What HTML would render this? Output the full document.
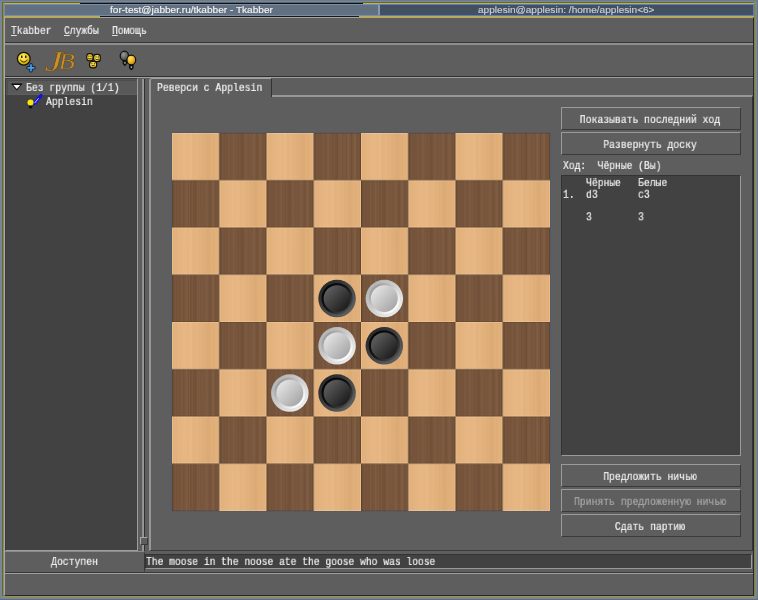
<!DOCTYPE html>
<html lang="ru">
<head>
<meta charset="utf-8">
<title>for-test@jabber.ru/tkabber - Tkabber</title>
<style>
html,body{margin:0;padding:0;}
body{width:758px;height:600px;overflow:hidden;background:#778797;position:relative;
  font-family:"Liberation Mono",monospace;font-size:12px;line-height:14px;color:#f2f2f2;}
*{box-sizing:border-box;}
.a,.hl,.t{position:absolute;}
.hl{left:5px;width:748px;height:1px;}
.dk{background:#333;}
.lt{background:#979797;}
.t{white-space:pre;transform:scale(.8035,.9);transform-origin:0 0;height:14px;will-change:transform;-webkit-text-stroke:.22px currentColor;}
.tc{transform-origin:50% 0;text-align:center;}
.w{transform:scale(.8118,.9);}
u{text-decoration:underline;text-underline-offset:1px;text-decoration-thickness:1px;}
#edge{left:0;top:0;width:758px;height:600px;border:solid #6e7d8e;border-width:1px 1px 1px 0;border-bottom-color:#5f6e7e;border-right-color:#6a7989;}
#frame{left:3px;top:3px;width:752px;height:594px;border:1px solid;border-color:#c8b61e #8f811c #a8981e #9c8d1e;background:#5e5e5e;box-shadow:-1px -1px 0 #566472;}
#tb1{left:4px;top:4px;width:375px;height:12px;background:#627182;border:1px solid #7a8ba2;border-right:none;}
#tb2{left:378px;top:4px;width:376px;height:12px;background:#43505f;border:1px solid #5f7cb8;border-left:2px solid #8799ae;}
#yl{left:4px;top:16px;width:750px;height:1px;background:#c4b21e;}
.title{-webkit-text-stroke:.15px currentColor;font-family:"Liberation Sans",sans-serif;font-size:9.2px;line-height:12px;height:12px;transform:scaleX(1.096);}
#blk1{left:80px;top:3px;width:283px;height:1px;background:#101010;}
#blk2{left:100px;top:16px;width:259px;height:1px;background:#181818;}
#win{left:4px;top:17px;width:750px;height:579px;background:#5e5e5e;border:1px solid;border-color:#a4a4a4 #26262c #23233a #a9a9ad;}
.btn{border:1px solid;border-color:#9a9a9a #3a3a3a #3a3a3a #9a9a9a;background:#5e5e5e;}
.sunk{border:1px solid;border-color:#333 #9a9a9a #9a9a9a #333;background:#424242;}
</style>
</head>
<body>
<div id="edge" class="a"></div>
<div id="frame" class="a"></div>
<div id="blk1" class="a"></div>
<div id="tb1" class="a"></div>
<div id="tb2" class="a"></div>
<div id="yl" class="a"></div>
<div id="blk2" class="a"></div>
<div class="t title" style="left:110px;top:4.3px;">for-test@jabber.ru/tkabber - Tkabber</div>
<div class="t title" style="left:478px;top:4.3px;color:#c8d0d8;">applesin@applesin: /home/applesin&lt;6&gt;</div>
<div id="win" class="a"></div>

<!-- menu bar -->
<div class="t" style="left:11.3px;top:25px;"><u>T</u>kabber</div>
<div class="t" style="left:64px;top:25px;"><u>С</u>лужбы</div>
<div class="t" style="left:112px;top:25px;"><u>П</u>омощь</div>
<div class="hl" style="top:42px;background:#383838;"></div>
<div class="hl" style="top:43px;height:2px;background:#8e8e8e;"></div>

<!-- toolbar -->
<svg class="a" style="left:10px;top:46px;will-change:transform;" width="130" height="30" viewBox="10 46 130 30">
  <defs>
    <radialGradient id="gy" cx="42%" cy="36%" r="70%"><stop offset="0" stop-color="#fff070"/><stop offset=".55" stop-color="#f0cc20"/><stop offset="1" stop-color="#b88808"/></radialGradient>
    <radialGradient id="go" cx="38%" cy="34%" r="72%"><stop offset="0" stop-color="#ffe070"/><stop offset=".5" stop-color="#f0b828"/><stop offset="1" stop-color="#b07c10"/></radialGradient>
    <radialGradient id="gf" cx="45%" cy="40%" r="65%"><stop offset="0" stop-color="#ffee60"/><stop offset=".7" stop-color="#f4cc24"/><stop offset="1" stop-color="#c89810"/></radialGradient>
    <radialGradient id="gg" cx="40%" cy="35%" r="70%"><stop offset="0" stop-color="#9a9a9a"/><stop offset="1" stop-color="#3c3c3c"/></radialGradient>
  </defs>
  <g>
    <circle cx="23.8" cy="58.7" r="6.4" fill="url(#gy)" stroke="#141414" stroke-width="1.3"/>
    <rect x="21" y="55.6" width="1.5" height="2.3" fill="#2a2208"/><rect x="25" y="55.6" width="1.5" height="2.3" fill="#2a2208"/>
    <path d="M20.2 59.8Q23.8 64.4 27.4 59.8" fill="none" stroke="#2a2208" stroke-width="1"/>
    <path d="M31 64.7v6.2M27.9 67.8h6.2" stroke="#10243c" stroke-width="3.4" stroke-linecap="round"/>
    <path d="M31 64.9v5.8M28.1 67.8h5.8" stroke="#4c9cec" stroke-width="1.7" stroke-linecap="round"/>
  </g>
  <g font-family="'Liberation Serif',serif" font-style="italic" fill="#c8902a" stroke="#6a4810" stroke-width=".45">
    <text x="44.4" y="71.4" font-size="29" textLength="18.5" lengthAdjust="spacingAndGlyphs">J</text>
    <text x="58.6" y="69.2" font-size="23.4" textLength="16.4" lengthAdjust="spacingAndGlyphs">B</text>
  </g>
  <g stroke="#101010" stroke-width="1.1" fill="url(#gf)">
    <rect x="86.8" y="53.6" width="6.2" height="7.2" rx="2.6"/>
    <rect x="93.7" y="54.4" width="6.6" height="7.2" rx="2.7"/>
    <rect x="89.5" y="61.5" width="7.2" height="6.4" rx="2.8"/>
  </g>
  <g fill="#2e2204">
    <rect x="88.5" y="55.5" width=".9" height="1.4"/><rect x="90.5" y="55.5" width=".9" height="1.4"/>
    <rect x="95.6" y="56.3" width=".9" height="1.4"/><rect x="97.8" y="56.3" width=".9" height="1.4"/>
    <rect x="91.5" y="63.1" width=".9" height="1.2"/><rect x="93.9" y="63.1" width=".9" height="1.2"/><rect x="91.7" y="65.2" width="2.9" height="1"/>
  </g>
  <path d="M88.2 58.2q1.7 1.6 3.4 0M95.4 59q1.8 1.6 3.6 0" fill="none" stroke="#2e2204" stroke-width=".9"/>
  <g stroke="#101010" stroke-width="1.2">
    <path d="M123.2 61h3.4v2.6l-1.7 1.7l-1.7-1.7z" fill="#3a3a3a"/>
    <ellipse cx="124.4" cy="55.9" rx="4.2" ry="4.7" fill="url(#gg)"/>
    <path d="M129.6 65.4h3.4v2.6l-1.7 1.7l-1.7-1.7z" fill="#3a3a3a"/>
    <ellipse cx="131.3" cy="60" rx="4.4" ry="4.8" fill="url(#go)"/>
  </g>
  <path d="M124.4 62.2h1.1v1.5h-1.1zM130.8 66.6h1.1v1.5h-1.1z" fill="#b4b4b4"/>
</svg>
<div class="hl" style="top:76px;background:#303030;"></div>
<div class="hl" style="top:77px;background:#a0a0a0;"></div>

<!-- roster -->
<div class="a sunk" style="left:5px;top:78px;width:133px;height:473px;border-color:#3c3c3c #9c9c9c #a0a0a0 #3a3a3a;"></div>
<div class="a" style="left:5px;top:551px;width:139px;height:1px;background:#8a8a8a;"></div>
<div class="a" style="left:6px;top:79px;width:131px;height:16px;border:1px solid #545454;border-bottom:none;"></div>
<div class="a" style="left:7px;top:80px;width:130px;height:15px;background:#595959;border:1px solid #4c4c4c;border-color:#4c4c4c #595959 #5f5f5f #4c4c4c;"></div>
<svg class="a" style="left:10px;top:82px;" width="36" height="28" viewBox="10 82 36 28">
  <path d="M10.9 83.6h11.8l-5.9 6.9z" fill="#0c0c0c"/>
  <path d="M13.3 84.9h7l-3.5 4z" fill="#fafafa"/>
  <rect x="28.9" y="105.2" width="3.3" height="3" fill="#0c0c0c"/>
  <path d="M34.2 103.6L41 95.6" stroke="#1414e0" stroke-width="3.3" stroke-linecap="round"/>
  <path d="M34.6 103L38.6 98.4" stroke="#e8e8ff" stroke-width=".9"/>
  <circle cx="30.5" cy="102.6" r="3" fill="#f4ec00"/>
</svg>
<div class="t w" style="left:26.2px;top:82px;">Без группы (1/1)</div>
<div class="t w" style="left:46.4px;top:96px;">Applesin</div>

<!-- sash -->
<div class="a" style="left:142px;top:79px;width:2px;height:472px;background:#8e8e8e;border-right:1px solid #9a9a9a;"></div>
<div class="a" style="left:144px;top:79px;width:1px;height:472px;background:#303030;"></div>
<div class="a btn" style="left:140px;top:537px;width:8px;height:8px;border-color:#a8a8a8 #3a3a3a #3a3a3a #a8a8a8;"></div>

<!-- notebook -->
<div class="a" style="left:149px;top:95px;width:604px;height:456px;border:1px solid;border-color:#9a9a9a #333 #3a3a3a #9a9a9a;border-left:2px solid #979797;border-top:2px solid #969696;"></div>
<div class="a" style="left:149px;top:78px;width:123px;height:19px;border:1px solid;border-color:#a0a0a0 #333 #5e5e5e #979797;border-left-width:2px;border-bottom:none;background:#5e5e5e;border-radius:3px 0 0 0;"></div>
<div class="t w" style="left:157px;top:82px;">Реверси с Applesin</div>

<!-- board -->
<div class="a" style="left:171px;top:132px;width:380px;height:380px;border:1px solid #515b69;"></div>
<svg id="board" class="a" style="left:172px;top:133px;" width="378" height="378" viewBox="0 0 378 378">
  <defs>
    <linearGradient id="lw" x1="0" x2="1" y1="0" y2="0"><stop offset="0.000" stop-color="#e1b07b"/><stop offset="0.031" stop-color="#e0af7a"/><stop offset="0.062" stop-color="#e3b37f"/><stop offset="0.094" stop-color="#e1b07b"/><stop offset="0.125" stop-color="#e4b480"/><stop offset="0.156" stop-color="#e5b480"/><stop offset="0.188" stop-color="#e4b37f"/><stop offset="0.219" stop-color="#e7b784"/><stop offset="0.250" stop-color="#e5b581"/><stop offset="0.281" stop-color="#e7b885"/><stop offset="0.312" stop-color="#e6b682"/><stop offset="0.344" stop-color="#e5b581"/><stop offset="0.375" stop-color="#e7b783"/><stop offset="0.406" stop-color="#e8b986"/><stop offset="0.438" stop-color="#e3b37f"/><stop offset="0.469" stop-color="#e3b27e"/><stop offset="0.500" stop-color="#e4b480"/><stop offset="0.531" stop-color="#e5b581"/><stop offset="0.562" stop-color="#e2b27d"/><stop offset="0.594" stop-color="#e0af7a"/><stop offset="0.625" stop-color="#e3b37e"/><stop offset="0.656" stop-color="#ddab76"/><stop offset="0.688" stop-color="#e1b07b"/><stop offset="0.719" stop-color="#deac76"/><stop offset="0.750" stop-color="#dcaa74"/><stop offset="0.781" stop-color="#dcaa74"/><stop offset="0.812" stop-color="#deac76"/><stop offset="0.844" stop-color="#e1b07b"/><stop offset="0.875" stop-color="#deac77"/><stop offset="0.906" stop-color="#e0af7a"/><stop offset="0.938" stop-color="#e1b07b"/><stop offset="0.969" stop-color="#e0af7a"/><stop offset="1.000" stop-color="#e1b07b"/></linearGradient>
    <linearGradient id="dw" x1="0" x2="1" y1="0" y2="0"><stop offset="0.000" stop-color="#6d4d35"/><stop offset="0.022" stop-color="#6c4c35"/><stop offset="0.043" stop-color="#6f4f37"/><stop offset="0.065" stop-color="#79583e"/><stop offset="0.087" stop-color="#75543b"/><stop offset="0.109" stop-color="#725139"/><stop offset="0.130" stop-color="#77563d"/><stop offset="0.152" stop-color="#75543b"/><stop offset="0.174" stop-color="#725139"/><stop offset="0.196" stop-color="#7c5a40"/><stop offset="0.217" stop-color="#7b593f"/><stop offset="0.239" stop-color="#715138"/><stop offset="0.261" stop-color="#77563d"/><stop offset="0.283" stop-color="#77563c"/><stop offset="0.304" stop-color="#7e5c42"/><stop offset="0.326" stop-color="#7c5a40"/><stop offset="0.348" stop-color="#725239"/><stop offset="0.370" stop-color="#805d43"/><stop offset="0.391" stop-color="#6f4f37"/><stop offset="0.413" stop-color="#74533a"/><stop offset="0.435" stop-color="#7b5a40"/><stop offset="0.457" stop-color="#6f4f37"/><stop offset="0.478" stop-color="#75543b"/><stop offset="0.500" stop-color="#6c4c35"/><stop offset="0.522" stop-color="#79573e"/><stop offset="0.543" stop-color="#7c5a40"/><stop offset="0.565" stop-color="#78573e"/><stop offset="0.587" stop-color="#7e5c42"/><stop offset="0.609" stop-color="#73523a"/><stop offset="0.630" stop-color="#7a583f"/><stop offset="0.652" stop-color="#78573e"/><stop offset="0.674" stop-color="#78573d"/><stop offset="0.696" stop-color="#75543b"/><stop offset="0.717" stop-color="#7d5b41"/><stop offset="0.739" stop-color="#805e43"/><stop offset="0.761" stop-color="#76553c"/><stop offset="0.783" stop-color="#7a583f"/><stop offset="0.804" stop-color="#6d4d36"/><stop offset="0.826" stop-color="#79583e"/><stop offset="0.848" stop-color="#7a583e"/><stop offset="0.870" stop-color="#815e44"/><stop offset="0.891" stop-color="#7e5c42"/><stop offset="0.913" stop-color="#725239"/><stop offset="0.935" stop-color="#73533a"/><stop offset="0.957" stop-color="#79583e"/><stop offset="0.978" stop-color="#6c4d35"/><stop offset="1.000" stop-color="#74533b"/></linearGradient>
    <pattern id="chk" width="94.5" height="94.5" patternUnits="userSpaceOnUse">
      <rect x="0" y="0" width="47.25" height="47.25" fill="url(#lw)"/>
      <rect x="47.25" y="0" width="47.25" height="47.25" fill="url(#dw)"/>
      <rect x="0" y="47.25" width="47.25" height="47.25" fill="url(#dw)"/>
      <rect x="47.25" y="47.25" width="47.25" height="47.25" fill="url(#lw)"/>
      <rect x="0.5" y="0.5" width="46.25" height="46.25" fill="none" stroke="#ffdcaa" stroke-opacity=".28"/>
      <rect x="47.75" y="47.75" width="46.25" height="46.25" fill="none" stroke="#ffdcaa" stroke-opacity=".28"/>
      <rect x="47.75" y="0.5" width="46.25" height="46.25" fill="none" stroke="#3a2412" stroke-opacity=".22"/>
      <rect x="0.5" y="47.75" width="46.25" height="46.25" fill="none" stroke="#3a2412" stroke-opacity=".22"/>
    </pattern>
    <linearGradient id="bo" x1="0.15" y1="0.15" x2="0.85" y2="0.85"><stop offset="0" stop-color="#26282a"/><stop offset="1" stop-color="#5c5e60"/></linearGradient>
    <linearGradient id="bg" x1="0.15" y1="0.15" x2="0.85" y2="0.85"><stop offset="0" stop-color="#050505"/><stop offset=".55" stop-color="#161616"/><stop offset="1" stop-color="#4a4a4a"/></linearGradient>
    <linearGradient id="bi" x1="0.15" y1="0.2" x2="0.85" y2="0.85"><stop offset="0" stop-color="#5a5a5a"/><stop offset="1" stop-color="#1e1e1e"/></linearGradient>
    <linearGradient id="wo" x1="0.15" y1="0.15" x2="0.85" y2="0.85"><stop offset="0" stop-color="#b4b4b4"/><stop offset="1" stop-color="#ececec"/></linearGradient>
    <linearGradient id="wg" x1="0.15" y1="0.15" x2="0.85" y2="0.85"><stop offset="0" stop-color="#9c9c9c"/><stop offset=".5" stop-color="#d0d0d0"/><stop offset="1" stop-color="#ffffff"/></linearGradient>
    <linearGradient id="wi" x1="0.15" y1="0.2" x2="0.85" y2="0.85"><stop offset="0" stop-color="#e0e0e0"/><stop offset="1" stop-color="#a8a8a8"/></linearGradient>
    <g id="bp"><circle r="18.75" fill="url(#bo)"/><circle r="15.6" fill="url(#bg)"/><circle r="13.4" fill="url(#bi)"/></g>
    <g id="wp"><circle r="18.75" fill="url(#wo)"/><circle r="15.6" fill="url(#wg)"/><circle r="13.4" fill="url(#wi)"/></g>
  </defs>
  <rect width="378" height="378" fill="url(#chk)"/>
  <use href="#bp" x="165.07" y="165.57"/>
  <use href="#wp" x="212.32" y="165.57"/>
  <use href="#wp" x="165.07" y="212.82"/>
  <use href="#bp" x="212.32" y="212.82"/>
  <use href="#wp" x="117.83" y="260.07"/>
  <use href="#bp" x="165.07" y="260.07"/>
</svg>

<!-- right panel -->
<div class="a btn" style="left:561px;top:107px;width:180px;height:23px;"><span class="t tc w" style="left:-61.8px;width:300px;top:6px;">Показывать последний ход</span></div>
<div class="a btn" style="left:561px;top:132px;width:180px;height:23px;"><span class="t tc w" style="left:-61.8px;width:300px;top:6px;">Развернуть доску</span></div>
<div class="t" style="left:563.2px;top:160px;">Ход:  Чёрные (Вы)</div>
<div class="a sunk" style="left:561px;top:175px;width:180px;height:281px;"></div>
<div class="t" style="left:562.6px;top:178px;line-height:12.8px;height:auto;">    Чёрные   Белые
1.  d3       c3

    3        3</div>
<div class="a btn" style="left:561px;top:464px;width:180px;height:23px;"><span class="t tc w" style="left:-61.8px;width:300px;top:6px;">Предложить ничью</span></div>
<div class="a btn" style="left:561px;top:489px;width:180px;height:23px;"><span class="t tc w" style="left:-61.8px;width:300px;top:6px;color:#a8a8a8;">Принять предложенную ничью</span></div>
<div class="a btn" style="left:561px;top:514px;width:180px;height:23px;"><span class="t tc w" style="left:-61.8px;width:300px;top:6px;">Сдать партию</span></div>

<!-- status bar -->
<div class="a btn" style="left:5px;top:552px;width:140px;height:20px;border-color:#5e5e5e #383838 #5e5e5e #5e5e5e;"><span class="t tc w" style="left:-1px;width:139px;top:3px;">Доступен</span></div>
<div class="a sunk" style="left:145px;top:554px;width:607px;height:15px;"></div>
<div class="t" style="left:146.4px;top:556px;">The moose in the noose ate the goose who was loose</div>
<div class="hl" style="top:572px;background:#383838;"></div>
<div class="hl" style="top:573px;background:#a0a0a0;"></div>
</body>
</html>
